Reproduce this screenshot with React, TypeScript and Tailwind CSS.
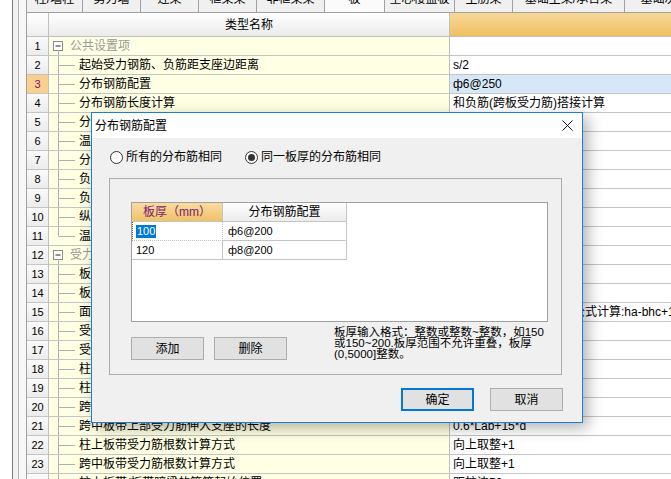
import React from 'react';

const F = "font-['Liberation_Sans','Noto_Sans_CJK_SC',sans-serif]";

const tabs = [
  { label: '柱/墙柱', w: 'w-[56px]' },
  { label: '剪力墙', w: 'w-[58px]' },
  { label: '连梁', w: 'w-[58px]' },
  { label: '框架梁', w: 'w-[58px]' },
  { label: '非框架梁', w: 'w-[68px]' },
  { label: '板', w: 'w-[60px]', active: true },
  { label: '空心楼盖板', w: 'w-[70px]' },
  { label: '主肋梁', w: 'w-[58px]' },
  { label: '基础主梁/承台梁', w: 'w-[112px]' },
  { label: '基础次梁', w: 'w-[80px]' },
];

type Row = { n: number; name: string; value?: string; group?: boolean; last?: boolean };

const rows: Row[] = [
  { n: 1, name: '公共设置项', group: true },
  { n: 2, name: '起始受力钢筋、负筋距支座边距离', value: 's/2' },
  { n: 3, name: '分布钢筋配置', value: 'ф6@250' },
  { n: 4, name: '分布钢筋长度计算', value: '和负筋(跨板受力筋)搭接计算' },
  { n: 5, name: '分布筋与负筋(跨板受力筋)的搭接长度', value: '150' },
  { n: 6, name: '温度筋与负筋(跨板受力筋)的搭接长度', value: 'll' },
  { n: 7, name: '分布钢筋根数计算方式', value: '向下取整+1' },
  { n: 8, name: '负筋(跨板受力筋)分布筋、温度筋是否带弯勾', value: '否' },
  { n: 9, name: '负筋/跨板受力筋在板内的弯折长度', value: '板厚-2*保护层' },
  { n: 10, name: '纵筋搭接接头错开百分率', value: '50%' },
  { n: 11, name: '温度筋起步距离', value: 's', last: true },
  { n: 12, name: '受力筋', group: true },
  { n: 13, name: '板底钢筋伸入支座的长度', value: 'max(ha/2,5*d)' },
  { n: 14, name: '板受力筋/板带钢筋按平均长度计算', value: '否' },
  { n: 15, name: '面筋(单标注跨板受力筋)伸入支座的锚固长度', value: '能直锚就直锚，否则按公式计算:ha-bhc+15*d' },
  { n: 16, name: '受力筋根数计算方式', value: '向上取整+1' },
  { n: 17, name: '受力筋遇洞口或端部无支座时的弯折长度', value: '板厚-2*保护层' },
  { n: 18, name: '柱上板带/板带暗梁下部受力筋伸入支座的长度', value: 'ha-bhc+15*d' },
  { n: 19, name: '柱上板带/板带暗梁上部受力筋伸入支座的长度', value: '0.6*Lab+15*d' },
  { n: 20, name: '跨中板带下部受力筋伸入支座的长度', value: 'max(ha/2,12*d)' },
  { n: 21, name: '跨中板带上部受力筋伸入支座的长度', value: '0.6*Lab+15*d' },
  { n: 22, name: '柱上板带受力筋根数计算方式', value: '向上取整+1' },
  { n: 23, name: '跨中板带受力筋根数计算方式', value: '向上取整+1' },
  { n: 24, name: '柱上板带/板带暗梁的箍筋起始位置', value: '距柱边50mm' },
];

function Tree({ group, last }: { group?: boolean; last?: boolean }) {
  if (group) {
    return (
      <svg width="18" height="18" className="shrink-0">
        <rect x="4.5" y="4.5" width="9" height="9" fill="#fff" stroke="#8c8c8c" />
        <line x1="6.5" y1="9" x2="11.5" y2="9" stroke="#222" />
        <line x1="9.5" y1="13.5" x2="9.5" y2="18" stroke="#b0b0b0" />
      </svg>
    );
  }
  return (
    <svg width="30" height="18" className="shrink-0">
      <line x1="9.5" y1="0" x2="9.5" y2={last ? 9 : 18} stroke="#b0b0b0" />
      <line x1="9.5" y1="9.5" x2="26" y2="9.5" stroke="#b0b0b0" />
    </svg>
  );
}

function Radio({ checked, label }: { checked?: boolean; label: string }) {
  return (
    <div className="flex items-center gap-[3px]">
      <div className="w-[13px] h-[13px] rounded-full border border-[#333] bg-white flex items-center justify-center">
        {checked && <div className="w-[7px] h-[7px] rounded-full bg-[#333]" />}
      </div>
      <span className="text-[12px] leading-[14px] text-black">{label}</span>
    </div>
  );
}

function Dialog() {
  return (
    <div className="absolute left-[91px] top-[112px] w-[492px] h-[311px] border border-[#1c7fd4] bg-[#f0f0f0] flex flex-col shadow-[5px_5px_14px_rgba(0,0,0,0.3)]">
      <div className="h-[25px] bg-white flex items-center justify-between pl-[3px] pr-[9px]">
        <span className="text-[12px] leading-[14px] text-black">分布钢筋配置</span>
        <svg width="11" height="11" viewBox="0 0 11 11">
          <path d="M0.5 0.5L10.5 10.5M10.5 0.5L0.5 10.5" stroke="#111" strokeWidth="1" />
        </svg>
      </div>
      <div className="flex items-center pt-[12px] pl-[18px] gap-[23px]">
        <Radio label="所有的分布筋相同" />
        <Radio checked label="同一板厚的分布筋相同" />
      </div>
      <div className="mt-[14px] ml-[17px] w-[453px] h-[197px] border border-[#adadad] pl-[21px] pt-[23px]">
        <div className="w-[417px] h-[120px] border border-[#a0a0a0] bg-white">
          <div className="flex h-[19px]">
            <div className="w-[91px] border-r border-b border-[#c4c4c4] bg-gradient-to-b from-[#f9dba0] to-[#f0c268] flex items-center justify-center text-[12px] text-[#7b1a74]">
              板厚（mm）
            </div>
            <div className="w-[124px] border-r border-b border-[#c4c4c4] bg-gradient-to-b from-white to-[#ececec] flex items-center justify-center text-[12px] text-black">
              分布钢筋配置
            </div>
          </div>
          <div className="flex h-[19px]">
            <div className="w-[91px] border-r border-b border-[#c4c4c4] flex items-center pl-[3px] border-l border-l-[#555] border-dotted">
              <span className="bg-[#0078d7] text-white text-[11px] leading-[13px] px-px">100</span>
            </div>
            <div className="w-[124px] border-r border-b border-[#c4c4c4] flex items-center pl-[5px] text-[11px] text-black">ф6@200</div>
          </div>
          <div className="flex h-[19px]">
            <div className="w-[91px] border-r border-b border-[#c4c4c4] flex items-center pl-[4px] text-[11px] text-black">120</div>
            <div className="w-[124px] border-r border-b border-[#c4c4c4] flex items-center pl-[5px] text-[11px] text-black">ф8@200</div>
          </div>
        </div>
        <div className="flex items-start mt-[5px]">
          <button className="mt-[10px] w-[73px] h-[23px] bg-[#e1e1e1] border border-[#adadad] text-[12px] text-black">添加</button>
          <button className="mt-[10px] ml-[10px] w-[73px] h-[23px] bg-[#e1e1e1] border border-[#adadad] text-[12px] text-black">删除</button>
          <div className="ml-[47px] text-[11.5px] leading-[11px] text-black whitespace-nowrap">
            <div>板厚输入格式：整数或整数~整数，如150</div>
            <div>或150~200.板厚范围不允许重叠，板厚</div>
            <div>(0,5000]整数。</div>
          </div>
        </div>
      </div>
      <div className="flex justify-end gap-[16px] mt-[13px] pr-[19px]">
        <button className="w-[73px] h-[23px] bg-[#e1e1e1] border-2 border-[#0078d7] text-[12px] text-black">确定</button>
        <button className="w-[73px] h-[23px] bg-[#e1e1e1] border border-[#adadad] text-[12px] text-black">取消</button>
      </div>
    </div>
  );
}

export default function App() {
  return (
    <div className={`relative w-[671px] h-[479px] overflow-hidden bg-white flex ${F}`}>
      {/* left frame strip */}
      <div className="w-[12px] bg-white shrink-0" />
      <div className="w-px bg-[#7a7a7a] shrink-0" />
      <div className="w-[6px] bg-[#f0f0f0] shrink-0 border-r border-[#b4b4b4]" />
      <div className="w-[8px] bg-[#f7f7f7] shrink-0 border-r border-[#a0a0a0]" />

      <div className="flex-1 flex flex-col min-w-0">
        {/* tab strip, mostly scrolled off */}
        <div className="h-[13px] flex overflow-hidden bg-[#f0f0f0] border-b border-[#a0a0a0] shrink-0">
          {tabs.map((t) => (
            <div
              key={t.label}
              className={`${t.w} shrink-0 border-r border-[#a0a0a0] flex justify-center ${t.active ? 'bg-[#fbfbfb]' : ''}`}
            >
              <span className="text-[12px] leading-[14px] -mt-[8px] text-black whitespace-nowrap">{t.label}</span>
            </div>
          ))}
        </div>

        {/* header */}
        <div className="flex h-[24px] shrink-0 border-b border-[#c0c0c0]">
          <div className="w-[22px] border-r border-[#c0c0c0] bg-gradient-to-b from-white to-[#eeeeee]" />
          <div className="w-[401px] border-r border-[#c0c0c0] bg-gradient-to-b from-white to-[#ebebeb] flex items-center justify-center text-[12px] text-black">
            类型名称
          </div>
          <div className="flex-1 bg-gradient-to-b from-[#f8d898] to-[#f0c060]" />
        </div>

        {/* rows */}
        {rows.map((r) => {
          const sel = r.n === 3;
          return (
            <div key={r.n} className="flex h-[19px] shrink-0 border-b border-[#c4c4c4]">
              <div
                className={`w-[22px] shrink-0 border-r border-[#c0c0c0] flex items-center justify-center text-[11px] ${
                  sel ? 'bg-[#fbd08e] text-[#7d0f7d]' : 'bg-gradient-to-b from-[#fafafa] to-[#ececec] text-black'
                }`}
              >
                {r.n}
              </div>
              <div className="w-[401px] shrink-0 border-r border-[#c0c0c0] bg-[#ffffe3] flex items-center overflow-hidden">
                <Tree group={r.group} last={r.last} />
                <span
                  className={`whitespace-nowrap text-[12px] leading-[14px] ${r.group ? 'text-[#9a9a9a] ml-[3px]' : 'text-black'}`}
                >
                  {r.name}
                </span>
              </div>
              <div
                className={`flex-1 min-w-0 flex items-center pl-[3px] overflow-hidden whitespace-nowrap text-[12px] leading-[14px] text-black ${
                  sel ? 'bg-[#d6e7f7]' : 'bg-white'
                }`}
              >
                {r.value}
              </div>
            </div>
          );
        })}
      </div>

      <Dialog />
    </div>
  );
}
